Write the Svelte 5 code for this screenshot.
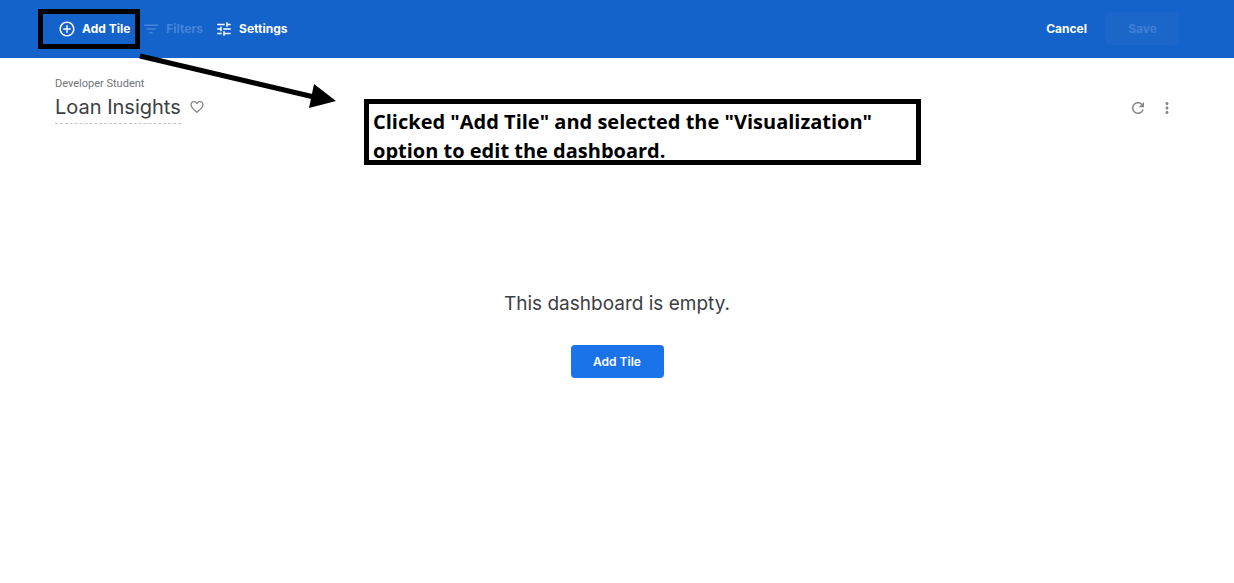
<script>
  const title = 'Loan Insights';
  const owner = 'Developer Student';
</script>

<div class="page">
  <header class="toolbar">
    <nav class="tools" aria-label="Dashboard tools">
      <button class="tool">
        <svg width="18" height="18" viewBox="0 0 24 24" aria-hidden="true">
          <path d="M13 7h-2v4H7v2h4v4h2v-4h4v-2h-4V7zm-1-5C6.48 2 2 6.48 2 12s4.48 10 10 10 10-4.48 10-10S17.52 2 12 2zm0 18c-4.41 0-8-3.59-8-8s3.59-8 8-8 8 3.59 8 8-3.59 8-8 8z" />
        </svg>
        Add Tile
      </button>
      <button class="tool" disabled>
        <svg width="18" height="18" viewBox="0 0 24 24" aria-hidden="true">
          <path d="M10 18h4v-2h-4v2zM3 6v2h18V6H3zm3 7h12v-2H6v2z" />
        </svg>
        Filters
      </button>
      <button class="tool">
        <svg width="18" height="18" viewBox="0 0 24 24" aria-hidden="true">
          <path d="M3 17v2h6v-2H3zM3 5v2h10V5H3zm10 16v-2h8v-2h-8v-2h-2v6h2zM7 9v2H3v2h4v2h2V9H7zm14 4v-2H11v2h10zm-6-4h2V7h4V5h-4V3h-2v6z" />
        </svg>
        Settings
      </button>
    </nav>
    <div class="actions">
      <button class="cancel">Cancel</button>
      <button class="save" disabled>Save</button>
    </div>
  </header>

  <main>
    <section class="heading">
      <div>
        <p class="owner">{owner}</p>
        <div class="title-row">
          <h1>{title}</h1>
          <button class="icon" aria-label="Favorite">
            <svg width="16" height="16" viewBox="0 0 24 24" aria-hidden="true">
              <path d="M16.5 3c-1.74 0-3.41.81-4.5 2.09C10.91 3.81 9.24 3 7.5 3 4.42 3 2 5.42 2 8.5c0 3.78 3.4 6.86 8.55 11.54L12 21.35l1.45-1.32C18.6 15.36 22 12.28 22 8.5 22 5.42 19.58 3 16.5 3zm-4.4 15.55l-.1.1-.1-.1C7.14 14.24 4 11.39 4 8.5 4 6.5 5.5 5 7.5 5c1.54 0 3.04.99 3.57 2.36h1.87C13.46 5.99 14.96 5 16.5 5c2 0 3.5 1.5 3.5 3.5 0 2.89-3.14 5.74-7.9 10.05z" />
            </svg>
          </button>
        </div>
      </div>
      <div class="page-actions">
        <button class="icon" aria-label="Reload">
          <svg width="18" height="18" viewBox="0 0 24 24" aria-hidden="true">
            <path d="M17.65 6.35C16.2 4.9 14.21 4 12 4c-4.42 0-7.99 3.58-7.99 8s3.57 8 7.99 8c3.73 0 6.84-2.55 7.73-6h-2.08c-.82 2.33-3.04 4-5.65 4-3.31 0-6-2.69-6-6s2.69-6 6-6c1.66 0 3.14.69 4.22 1.78L13 11h7V4l-2.35 2.35z" />
          </svg>
        </button>
        <button class="icon" aria-label="More options">
          <svg width="18" height="18" viewBox="0 0 24 24" aria-hidden="true">
            <path d="M12 8c1.1 0 2-.9 2-2s-.9-2-2-2-2 .9-2 2 .9 2 2 2zm0 2c-1.1 0-2 .9-2 2s.9 2 2 2 2-.9 2-2-.9-2-2-2zm0 6c-1.1 0-2 .9-2 2s.9 2 2 2 2-.9 2-2-.9-2-2-2z" />
          </svg>
        </button>
      </div>
    </section>

    <section class="empty">
      <h2>This dashboard is empty.</h2>
      <button class="primary">Add Tile</button>
    </section>
  </main>

  <!-- Callout drawn over the dashboard -->
  <div class="highlight"></div>
  <svg class="arrow" width="202" height="62" viewBox="0 0 202 62" aria-hidden="true">
    <path d="M4 7 L178 48" stroke="#000" stroke-width="5" fill="none" />
    <path d="M178 35 L200 52 L173 59 Z" />
  </svg>
  <p class="note">Clicked "Add Tile" and selected the "Visualization" option to edit the dashboard.</p>
</div>

<style>
  :global(body) {
    margin: 0;
    background: #fff;
  }

  .page {
    position: relative;
    min-height: 100vh;
    font-family: Inter, 'Open Sans', sans-serif;
    color: #3c4043;
  }

  h1,
  h2,
  p {
    margin: 0;
    font-weight: 400;
  }

  button {
    margin: 0;
    padding: 0;
    border: 0;
    background: none;
    color: inherit;
    font: inherit;
    cursor: pointer;
  }

  button:disabled {
    cursor: default;
  }

  svg {
    display: block;
    fill: currentColor;
  }

  .toolbar {
    display: flex;
    align-items: center;
    justify-content: space-between;
    box-sizing: border-box;
    height: 58px;
    padding: 0 55px 1px 58px;
    background: #1363cb;
    color: #fff;
    font-size: 12px;
    font-weight: 700;
  }

  .tools {
    display: flex;
    gap: 12px;
  }

  .tool {
    display: flex;
    align-items: center;
    gap: 6px;
  }

  .tool:disabled {
    color: #4585d8;
  }

  .actions {
    display: flex;
    align-items: center;
    gap: 19px;
  }

  .save {
    width: 73px;
    height: 33px;
    border-radius: 4px;
    background: #1b66c9;
  }

  .save:disabled {
    color: #3f80d3;
  }

  .heading {
    display: flex;
    justify-content: space-between;
    align-items: flex-end;
    padding: 18px 58px 0 55px;
  }

  .owner {
    color: #6f7478;
    font-family: Roboto, sans-serif;
    font-size: 11px;
    line-height: 16px;
  }

  .title-row {
    display: flex;
    align-items: flex-start;
    gap: 8px;
  }

  h1 {
    padding-bottom: 1px;
    border-bottom: 1px dashed #c4c7ca;
    font-size: 20px;
    line-height: 30px;
  }

  .icon {
    color: #85898d;
  }

  .title-row .icon {
    padding-top: 7px;
  }

  .page-actions {
    display: flex;
    gap: 11px;
    padding-bottom: 7px;
  }

  .empty {
    display: flex;
    flex-direction: column;
    align-items: center;
    gap: 26px;
    padding-top: 165px;
  }

  h2 {
    font-size: 19px;
    line-height: 30px;
  }

  .primary {
    width: 93px;
    height: 33px;
    border-radius: 4px;
    background: #1a73e8;
    color: #fff;
    font-size: 12px;
    font-weight: 600;
  }

  .highlight {
    position: absolute;
    top: 9px;
    left: 38px;
    box-sizing: border-box;
    width: 102px;
    height: 40px;
    border: 5px solid #000;
    pointer-events: none;
  }

  .arrow {
    position: absolute;
    top: 49px;
    left: 136px;
    fill: #000;
    pointer-events: none;
  }

  .note {
    position: absolute;
    top: 99px;
    left: 364px;
    box-sizing: border-box;
    width: 557px;
    height: 66px;
    padding: 3px 4px 0;
    overflow: hidden;
    border: 5px solid #000;
    background: #fff;
    color: #000;
    font-family: 'Open Sans', sans-serif;
    font-size: 20px;
    font-weight: 700;
    line-height: 29px;
  }
</style>
